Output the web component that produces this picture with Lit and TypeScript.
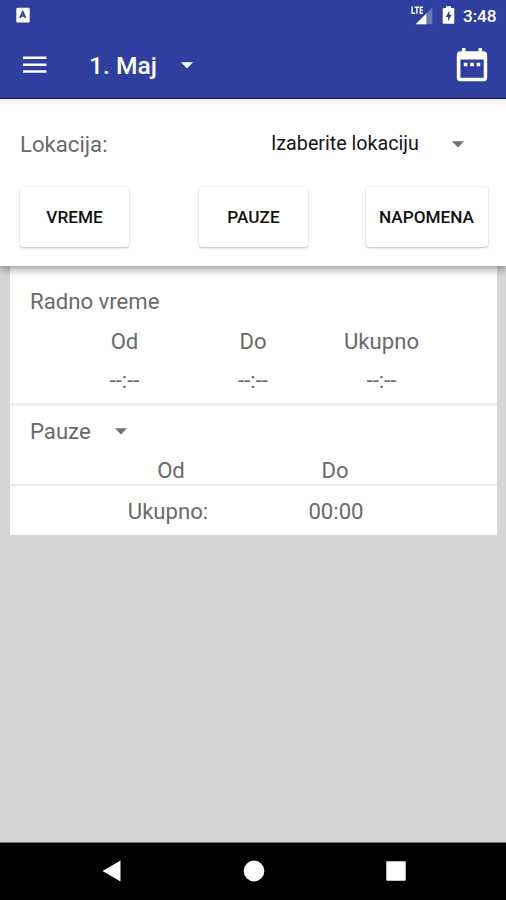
import { LitElement, html, css } from "lit";
import { customElement } from "lit/decorators.js";

@customElement("status-bar")
class StatusBar extends LitElement {
  static styles = css`
    :host { display: flex; height: 30px; align-items: center; padding: 0 9px 0 16px; box-sizing: border-box; }
    .app { width: 14px; height: 16px; margin-right: auto; }
    .signal { width: 23px; height: 20px; }
    .battery { width: 13px; height: 18px; margin-left: 8px; }
    .time { width: 34px; margin-left: 8px; font-weight: 500; font-size: 17.2px; line-height: 20px; padding-top: 2px; letter-spacing: -0.1px; }
    svg { display: block; }
  `;
  render() {
    return html`
      <svg class="app" viewBox="0 0 14 16">
        <rect x="0.3" y="0.8" width="13.4" height="14.6" rx="1.2" fill="#fff" />
        <path d="M4 10.8 6.8 4.8 9.5 10.8M5.2 9h3.2" fill="none" stroke="#303f9f" stroke-width="1.7" />
      </svg>
      <svg class="signal" viewBox="0 0 23 20">
        <path d="M21.3 2.6V19.2H4.7Z" fill="#fff" opacity=".3" />
        <path d="M15.3 8.6V19.2H4.7Z" fill="#fff" />
        <path d="M0 0H13V9H0Z" fill="#303f9f" />
        <path d="M1.1 1.6V8.2H4.1M3.6 2.3H8.1M5.9 2.3V8.8M12 2.3H9.3V8.2H12M9.3 5.2H11.7" fill="none" stroke="#fff" stroke-width="1.4" />
      </svg>
      <svg class="battery" viewBox="0 0 13 18">
        <path d="M4 0.2H9V2H11.3Q12.3 2 12.3 3V16.8Q12.3 17.8 11.3 17.8H1.7Q0.7 17.8 0.7 16.8V3Q0.7 2 1.7 2H4Z" fill="#fff" />
        <path d="M7.4 4.5 3.7 11H6V15.2L9.6 8.7H7.4Z" fill="#303f9f" />
      </svg>
      <span class="time">3:48</span>
    `;
  }
}

@customElement("tool-bar")
class ToolBar extends LitElement {
  static styles = css`
    :host { display: flex; height: 69px; align-items: center; box-sizing: border-box; padding: 1px 17px 0 23px; }
    svg { display: block; }
    .menu { width: 24px; height: 18px; margin-right: 42px; }
    .title { font-weight: 500; font-size: 24.6px; line-height: 30px; width: 92px; padding-top: 2px; white-space: nowrap; }
    .caret { width: 12px; height: 7px; margin-right: auto; }
    .calendar { width: 34px; height: 36px; }
  `;
  render() {
    return html`
      <svg class="menu" viewBox="0 0 24 18">
        <path d="M0 1.8H23.4M0 8.7H23.4M0 15.6H23.4" stroke="#fff" stroke-width="2.5" />
      </svg>
      <span class="title">1. Maj</span>
      <svg class="caret" viewBox="0 0 12 7"><path d="M0 .2H12L6 6.6Z" fill="#fff" /></svg>
      <svg class="calendar" viewBox="0 0 34 36">
        <path fill="#fff" fill-rule="evenodd" d="M7 1H10.5V4.3H23.5V1H27V4.3H28.5Q32.2 4.3 32.2 8V30.5Q32.2 34.2 28.5 34.2H5.5Q1.8 34.2 1.8 30.5V8Q1.8 4.3 5.5 4.3H7ZM5.4 12.5V30.8H28.7V12.5Z" />
        <path fill="#fff" d="M8.8 15.7h3.6v3.6H8.8zM15.2 15.7h3.6v3.6h-3.6zM21.6 15.7h3.6v3.6h-3.6z" />
      </svg>
    `;
  }
}

@customElement("app-root")
class AppRoot extends LitElement {
  static styles = css`
    :host { display: flex; flex-direction: column; height: 900px; background: #d5d7d6; font-family: Roboto, sans-serif; font-size: 22.15px; line-height: 26px; color: #6a6a6a; overflow: hidden; }
    svg { display: block; }
    .header { background: #303f9f; color: #fff; height: 99px; box-sizing: border-box; border-bottom: 1px solid #10168a; z-index: 1; }
    .filters { z-index: 1; height: 167px; background: linear-gradient(#f3f3f3, #fff 9px); box-shadow: 0 3px 9px rgba(0, 0, 0, 0.42); box-sizing: border-box; padding: 32px 18px 19px 20px; display: flex; flex-direction: column; justify-content: space-between; }
    .location { display: flex; align-items: center; height: 26px; }
    .picker { display: flex; align-items: center; width: 217px; margin-left: auto; font-size: 19.7px; color: #151515; white-space: nowrap; }
    .picker .caret { margin: 0 24px 0 auto; }
    .caret { width: 12px; height: 7px; }
    .buttons { display: flex; }
    .button { font: 500 17.2px/60px Roboto, sans-serif; height: 60px; width: 109px; padding: 0; border: 0; border-radius: 3px; background: #fff; color: #111; box-shadow: 0 1px 2px rgba(0, 0, 0, 0.22), 0 0 2px rgba(0, 0, 0, 0.12); }
    .button + .button { margin-left: 70px; }
    .button.wide { width: 122px; margin-left: auto !important; padding-right: 1px; }
    .card { width: 487px; height: 269px; margin-left: 10px; background: #fff; display: flex; flex-direction: column; box-sizing: border-box; }
    .work { height: 140px; box-sizing: border-box; border-bottom: 3px solid #efefef; padding-top: 22px; }
    .heading { padding-left: 20px; display: flex; align-items: center; gap: 24px; }
    .grid { display: grid; grid-template-columns: repeat(3, 128.5px); justify-content: center; text-align: center; row-gap: 13px; margin: 14px 1px 0 0; }
    .breaks { height: 80px; box-sizing: border-box; border-bottom: 2px solid #e9e9e9; padding-top: 12px; }
    .pair { display: grid; grid-template-columns: 164px 164px; justify-content: center; text-align: center; margin: 13px 1px 0 0; }
    .total { padding-top: 12px; display: grid; grid-template-columns: 168px 168px; padding-left: 74px; text-align: center; }
    .nav { height: 58px; margin-top: auto; background: #000; display: flex; align-items: center; justify-content: center; gap: 120px; border-top: 1px solid #777; box-sizing: border-box; padding: 0 0 2px 1px; }
    .nav svg { width: 22px; height: 22px; }
  `;
  render() {
    const caret = html`<svg class="caret" viewBox="0 0 12 7"><path d="M0 .2H12L6 6.6Z" fill="#707070" /></svg>`;
    return html`
      <header class="header">
        <status-bar></status-bar>
        <tool-bar></tool-bar>
      </header>
      <section class="filters">
        <div class="location">
          <span>Lokacija:</span>
          <div class="picker"><span>Izaberite lokaciju</span>${caret}</div>
        </div>
        <div class="buttons">
          <button class="button">VREME</button>
          <button class="button">PAUZE</button>
          <button class="button wide">NAPOMENA</button>
        </div>
      </section>
      <main class="card">
        <section class="work">
          <div class="heading">Radno vreme</div>
          <div class="grid">
            <span>Od</span><span>Do</span><span>Ukupno</span>
            <span>--:--</span><span>--:--</span><span>--:--</span>
          </div>
        </section>
        <section class="breaks">
          <div class="heading"><span>Pauze</span>${caret}</div>
          <div class="pair"><span>Od</span><span>Do</span></div>
        </section>
        <section class="total"><span>Ukupno:</span><span>00:00</span></section>
      </main>
      <nav class="nav">
        <svg viewBox="0 0 22 22"><path d="M1.5 11 19.5 .6V21.4Z" fill="#fff" /></svg>
        <svg viewBox="0 0 22 22"><circle cx="11" cy="11" r="10.4" fill="#fff" /></svg>
        <svg viewBox="0 0 22 22"><rect x="1.3" y="1.3" width="19.4" height="19.4" rx="1" fill="#fff" /></svg>
      </nav>
    `;
  }
}
